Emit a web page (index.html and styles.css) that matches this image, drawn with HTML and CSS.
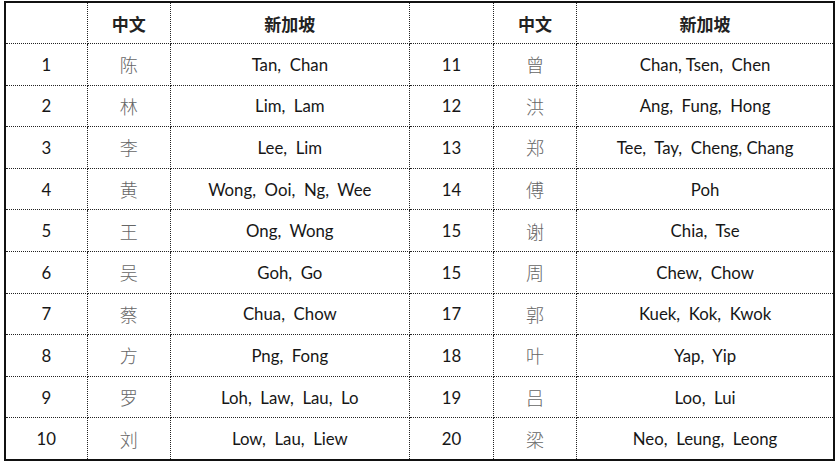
FILE: index.html
```html
<!DOCTYPE html>
<html lang="zh">
<head>
<meta charset="utf-8">
<title>姓氏对照</title>
<link rel="stylesheet" href="styles.css">
</head>
<body>
<table class="names">
  <colgroup>
    <col class="c-num"><col class="c-zh"><col class="c-sg">
    <col class="c-num2"><col class="c-zh"><col class="c-sg2">
  </colgroup>
  <thead>
    <tr><th></th><th>中文</th><th>新加坡</th><th></th><th>中文</th><th>新加坡</th></tr>
  </thead>
  <tbody>
    <tr><td>1</td><td class="zh">陈</td><td>Tan,&nbsp; Chan</td><td>11</td><td class="zh">曾</td><td>Chan, Tsen,&nbsp; Chen</td></tr>
    <tr><td>2</td><td class="zh">林</td><td>Lim,&nbsp; Lam</td><td>12</td><td class="zh">洪</td><td>Ang,&nbsp; Fung,&nbsp; Hong</td></tr>
    <tr><td>3</td><td class="zh">李</td><td>Lee,&nbsp; Lim</td><td>13</td><td class="zh">郑</td><td>Tee,&nbsp; Tay,&nbsp; Cheng, Chang</td></tr>
    <tr><td>4</td><td class="zh">黄</td><td>Wong,&nbsp; Ooi,&nbsp; Ng,&nbsp; Wee</td><td>14</td><td class="zh">傅</td><td>Poh</td></tr>
    <tr><td>5</td><td class="zh">王</td><td>Ong,&nbsp; Wong</td><td>15</td><td class="zh">谢</td><td>Chia,&nbsp; Tse</td></tr>
    <tr><td>6</td><td class="zh">吴</td><td>Goh,&nbsp; Go</td><td>15</td><td class="zh">周</td><td>Chew,&nbsp; Chow</td></tr>
    <tr><td>7</td><td class="zh">蔡</td><td>Chua,&nbsp; Chow</td><td>17</td><td class="zh">郭</td><td>Kuek,&nbsp; Kok,&nbsp; Kwok</td></tr>
    <tr><td>8</td><td class="zh">方</td><td>Png,&nbsp; Fong</td><td>18</td><td class="zh">叶</td><td>Yap,&nbsp; Yip</td></tr>
    <tr><td>9</td><td class="zh">罗</td><td>Loh,&nbsp; Law,&nbsp; Lau,&nbsp; Lo</td><td>19</td><td class="zh">吕</td><td>Loo,&nbsp; Lui</td></tr>
    <tr><td>10</td><td class="zh">刘</td><td>Low,&nbsp; Lau,&nbsp; Liew</td><td>20</td><td class="zh">梁</td><td>Neo,&nbsp; Leung,&nbsp; Leong</td></tr>
  </tbody>
</table>
</body>
</html>
```
FILE: styles.css
```css
html, body {
  margin: 0;
  padding: 0;
  background: #ffffff;
}
body {
  padding: 1px 0 0 4px;
}
.names {
  border-collapse: collapse;
  table-layout: fixed;
  width: 831px;
  border: 2px solid #111;
  font-family: Lato, "Open Sans", "Liberation Sans", "Noto Sans CJK SC", sans-serif;
  font-size: 16.8px;
  color: #161616;
}
.c-num { width: 82px; }
.c-zh { width: 83px; }
.c-sg { width: 239px; }
.c-num2 { width: 84px; }
.c-sg2 { width: 257px; }
.names th, .names td {
  border: 1px dotted #222;
  text-align: center;
  vertical-align: middle;
  padding: 0;
  white-space: nowrap;
}
.names th {
  height: 40px;
  font-family: "Noto Sans CJK SC", sans-serif;
  font-weight: 700;
  font-size: 17px;
  color: #222;
}
.names td {
  height: 40.6px;
}
.names td.zh {
  font-family: "Noto Sans CJK SC", sans-serif;
  font-weight: 300;
  font-size: 18px;
  color: #666;
}
```
